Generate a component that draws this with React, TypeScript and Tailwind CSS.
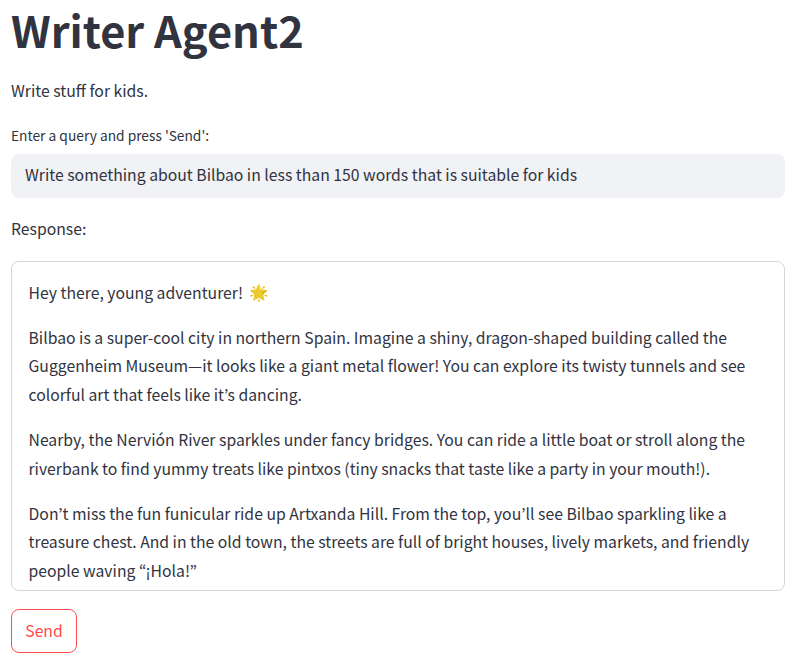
const paragraphs: string[][] = [
  [
    "Bilbao is a super-cool city in northern Spain. Imagine a shiny, dragon-shaped building called the",
    "Guggenheim Museum—it looks like a giant metal flower! You can explore its twisty tunnels and see",
    "colorful art that feels like it’s dancing.",
  ],
  [
    "Nearby, the Nervión River sparkles under fancy bridges. You can ride a little boat or stroll along the",
    "riverbank to find yummy treats like pintxos (tiny snacks that taste like a party in your mouth!).",
  ],
  [
    "Don’t miss the fun funicular ride up Artxanda Hill. From the top, you’ll see Bilbao sparkling like a",
    "treasure chest. And in the old town, the streets are full of bright houses, lively markets, and friendly",
    "people waving “¡Hola!”",
  ],
];

function Paragraph({ lines }: { lines: string[] }) {
  return (
    <p>
      {lines.map((line) => (
        <span key={line} className="block whitespace-nowrap">
          {line}
        </span>
      ))}
    </p>
  );
}

export default function App() {
  return (
    <main className="min-h-[664px] bg-white px-[11px] font-['Noto_Sans_CJK_KR',sans-serif] text-[15.75px] leading-[28.6px] text-[#31333f]">
      <h1 className="h-[77px] text-[43.35px] leading-[58px] font-bold">Writer Agent2</h1>
      <p>Write stuff for kids.</p>
      <label htmlFor="query" className="mt-[15px] block text-[13.77px]">
        Enter a query and press 'Send':
      </label>
      <input
        id="query"
        readOnly
        value="Write something about Bilbao in less than 150 words that is suitable for kids"
        className="mt-[4.8px] block h-11 w-[774px] rounded-lg bg-[#f0f2f6] px-[14px] pb-[3px] outline-none"
      />
      <p className="mt-[17px]">Response:</p>
      <section className="mt-[17.4px] flex h-[330px] w-[774px] flex-col gap-[16.4px] overflow-hidden rounded-lg border border-[#d6d6d9] px-[16.5px] pt-[16.8px]">
        <p>
          Hey there, young adventurer!{" "}
          <span className="ml-[2px] inline-block h-5 align-[1px] leading-5 brightness-[.93]">🌟</span>
        </p>
        {paragraphs.map((lines) => (
          <Paragraph key={lines[0]} lines={lines} />
        ))}
      </section>
      <button className="mt-[18px] flex h-11 w-[66px] items-center justify-center rounded-lg border border-[#ff4b4b] text-[#ff4b4b]">
        Send
      </button>
    </main>
  );
}
